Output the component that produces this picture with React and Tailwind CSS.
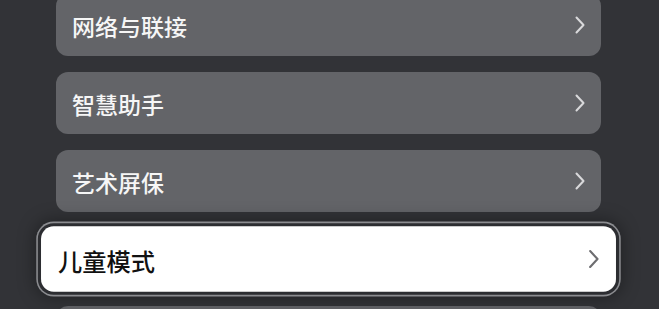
import React from 'react';

const items = [
  { id: 'network', label: '网络与联接' },
  { id: 'assistant', label: '智慧助手' },
  { id: 'art', label: '艺术屏保' },
  { id: 'kids', label: '儿童模式', focused: true },
  { id: 'next', label: '' },
];

const Chevron = ({ className }) => (
  <svg width="10" height="18" viewBox="0 0 10 18" fill="none" className={className}>
    <polyline
      points="1.5,1.5 8.5,9 1.5,16.5"
      stroke="currentColor"
      strokeWidth="2"
      strokeLinecap="round"
      strokeLinejoin="round"
    />
  </svg>
);

const MenuRow = ({ label, focused }) => {
  if (focused) {
    return (
      <div className="h-[62px] w-full scale-[1.055] rounded-[12px] bg-white flex items-center justify-between pl-4 pr-4 text-[#111] shadow-[0_0_0_3px_#2c2d31,0_0_0_4.5px_#8b8c90,0_0_16px_6px_rgba(0,0,0,0.35)]">
        <span className="text-[23px] font-medium leading-none pt-[2px]">{label}</span>
        <Chevron className="text-[#6d6d70]" />
      </div>
    );
  }
  return (
    <div className="h-[62px] w-full rounded-[12px] bg-[#636468] flex items-center justify-between pl-4 pr-4 text-[#f6f6f6]">
      {label && <span className="text-[23px] font-medium leading-none pt-[2px]">{label}</span>}
      {label && <Chevron className="text-[#d9d9db]" />}
    </div>
  );
};

export default function App() {
  return (
    <div
      className="h-[309px] w-full overflow-hidden bg-[#323337]"
      style={{ fontFamily: '"Noto Sans CJK SC", "Noto Sans", sans-serif' }}
    >
      <div className="ml-[56px] w-[545px] -mt-[6px] flex flex-col gap-4">
        {items.map((item) => (
          <MenuRow key={item.id} {...item} />
        ))}
      </div>
    </div>
  );
}
